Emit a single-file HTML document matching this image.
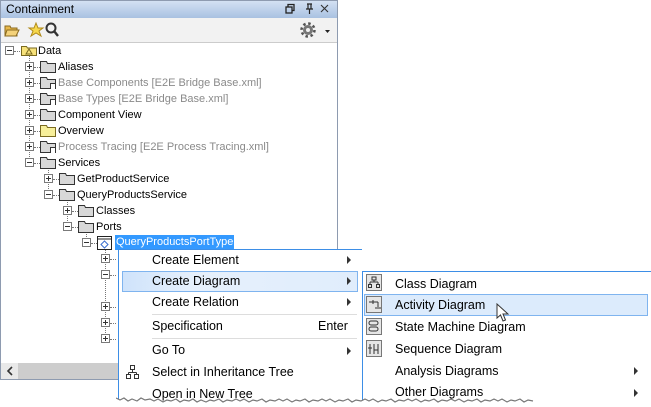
<!DOCTYPE html>
<html><head><style>
*{margin:0;padding:0;box-sizing:border-box}
body{width:651px;height:407px;background:#fff;position:relative;overflow:hidden;font-family:"Liberation Sans",sans-serif;font-size:11px;color:#000}
.a{position:absolute}
.t{position:absolute;white-space:nowrap;line-height:14px}
.g{color:#8a8a8a}
.ex{position:absolute;width:9px;height:9px;border:1px solid #7a7a7a;background:#fff;z-index:2}
.ex:before{content:"";position:absolute;left:1px;top:3px;width:5px;height:1px;background:#333}
.ex.p:after{content:"";position:absolute;left:3px;top:1px;width:1px;height:5px;background:#333}
.fo{position:absolute;width:16px;height:12px}
.hd{position:absolute;border-top:1px dotted #777;width:6px;height:0}
.vd{position:absolute;border-left:1px dotted #777;width:0}
.mi{position:absolute;left:152px;font-size:12.5px;line-height:15px}
.ar{position:absolute;width:0;height:0;border-left:4px solid #333;border-top:4px solid transparent;border-bottom:4px solid transparent}
.sm{position:absolute;left:395px;font-size:12.5px;line-height:15px}
</style></head><body>
<div class="a" style="left:0;top:0;width:338px;height:380px;border:1px solid #8e9bb0;background:#fff"></div>
<div class="a" style="left:0;top:0;width:338px;height:18px;background:linear-gradient(#d3e1f3,#a9c1e1);border:1px solid #8e9bb0;border-bottom:none"></div>
<div class="t" style="left:6px;top:2px;font-size:12px">Containment</div>
<svg class="a" style="left:280px;top:3px" width="50" height="12"><rect x="6" y="4" width="6" height="6" fill="none" stroke="#222" stroke-width="1.3"/><path d="M8 4V1.5h6v6h-2" fill="none" stroke="#222" stroke-width="1.3"/><path d="M27 1h5M28 1v5M31 1v5M26 6h7M29.5 6v5" stroke="#222" stroke-width="1.2" fill="none"/><path d="M41 2l7 7M48 2l-7 7" stroke="#333" stroke-width="1.1"/></svg>
<div class="a" style="left:1px;top:18px;width:336px;height:24px;background:#f2f2f2"></div>
<svg class="a" style="left:4px;top:22px" width="60" height="16"><path d="M1 4h5l1 2h6v8H1z" fill="#e8b84a" stroke="#8a6a20"/><path d="M3 8h12l-3 6H1z" fill="#f4d27a" stroke="#8a6a20"/><path d="M32 1l2 5h5l-4 3 2 5-5-3-5 3 2-5-4-3h5z" fill="#f7d84c" stroke="#b08a1a"/><circle cx="47" cy="6" r="4.5" fill="none" stroke="#333" stroke-width="2"/><path d="M50 9l4 5" stroke="#333" stroke-width="2.4"/></svg>
<svg class="a" style="left:300px;top:22px" width="36" height="16"><circle cx="8" cy="8" r="5" fill="#777"/><circle cx="8" cy="8" r="6.5" fill="none" stroke="#555" stroke-width="2.5" stroke-dasharray="2.5 2.6"/><circle cx="8" cy="8" r="2" fill="#f2f2f2"/><path d="M25 8h5l-2.5 3z" fill="#222"/></svg>
<div class="a" style="left:1px;top:42px;width:336px;height:1px;background:#ccc"></div>
<div class="vd" style="left:29px;top:56px;height:107px"></div>
<div class="vd" style="left:48px;top:168px;height:27px"></div>
<div class="vd" style="left:67px;top:200px;height:27px"></div>
<div class="vd" style="left:86px;top:232px;height:11px"></div>
<div class="vd" style="left:105px;top:248px;height:91px"></div>
<div class="ex" style="left:5px;top:46px"></div><div class="hd" style="left:14px;top:51px"></div>
<svg class="fo" style="left:21px;top:44px"><path d="M0.5 2.5h5l1 1.5h9v7.5H0.5z" fill="#f7e27b" stroke="#7a6a20"/><path d="M5 10l3-5 3 5z" fill="none" stroke="#7a6a20"/></svg>
<div class="t" style="left:38px;top:44px">Data</div>
<div class="ex p" style="left:25px;top:62px"></div><div class="hd" style="left:34px;top:67px"></div>
<svg class="fo" style="left:40px;top:61px"><path d="M0.5 0.5h6l1 2h8v9H0.5z" fill="#d8d8d8" stroke="#333"/></svg>
<div class="t" style="left:58px;top:60px">Aliases</div>
<div class="ex p" style="left:25px;top:78px"></div><div class="hd" style="left:34px;top:83px"></div>
<svg class="fo" style="left:40px;top:77px"><path d="M0.5 0.5h6l1 2h8v9H0.5z" fill="#d8d8d8" stroke="#333"/><rect x="10.5" y="6.5" width="5" height="6" fill="#fff" stroke="#333"/></svg>
<div class="t g" style="left:58px;top:76px">Base Components [E2E Bridge Base.xml]</div>
<div class="ex p" style="left:25px;top:94px"></div><div class="hd" style="left:34px;top:99px"></div>
<svg class="fo" style="left:40px;top:93px"><path d="M0.5 0.5h6l1 2h8v9H0.5z" fill="#d8d8d8" stroke="#333"/><rect x="10.5" y="6.5" width="5" height="6" fill="#fff" stroke="#333"/></svg>
<div class="t g" style="left:58px;top:92px">Base Types [E2E Bridge Base.xml]</div>
<div class="ex p" style="left:25px;top:110px"></div><div class="hd" style="left:34px;top:115px"></div>
<svg class="fo" style="left:40px;top:109px"><path d="M0.5 0.5h6l1 2h8v9H0.5z" fill="#d8d8d8" stroke="#333"/></svg>
<div class="t" style="left:58px;top:108px">Component View</div>
<div class="ex p" style="left:25px;top:126px"></div><div class="hd" style="left:34px;top:131px"></div>
<svg class="fo" style="left:40px;top:125px"><path d="M0.5 0.5h6l1 2h8v9H0.5z" fill="#f7ef9a" stroke="#7a6a20"/></svg>
<div class="t" style="left:58px;top:124px">Overview</div>
<div class="ex p" style="left:25px;top:142px"></div><div class="hd" style="left:34px;top:147px"></div>
<svg class="fo" style="left:40px;top:141px"><path d="M0.5 0.5h6l1 2h8v9H0.5z" fill="#d8d8d8" stroke="#333"/><rect x="10.5" y="6.5" width="5" height="6" fill="#fff" stroke="#333"/></svg>
<div class="t g" style="left:58px;top:140px">Process Tracing [E2E Process Tracing.xml]</div>
<div class="ex" style="left:25px;top:158px"></div><div class="hd" style="left:34px;top:163px"></div>
<svg class="fo" style="left:40px;top:157px"><path d="M0.5 0.5h6l1 2h8v9H0.5z" fill="#d8d8d8" stroke="#333"/></svg>
<div class="t" style="left:58px;top:156px">Services</div>
<div class="ex p" style="left:44px;top:174px"></div><div class="hd" style="left:53px;top:179px"></div>
<svg class="fo" style="left:59px;top:173px"><path d="M0.5 0.5h6l1 2h8v9H0.5z" fill="#d8d8d8" stroke="#333"/></svg>
<div class="t" style="left:77px;top:172px">GetProductService</div>
<div class="ex" style="left:44px;top:190px"></div><div class="hd" style="left:53px;top:195px"></div>
<svg class="fo" style="left:59px;top:189px"><path d="M0.5 0.5h6l1 2h8v9H0.5z" fill="#d8d8d8" stroke="#333"/></svg>
<div class="t" style="left:77px;top:188px">QueryProductsService</div>
<div class="ex p" style="left:63px;top:206px"></div><div class="hd" style="left:72px;top:211px"></div>
<svg class="fo" style="left:78px;top:205px"><path d="M0.5 0.5h6l1 2h8v9H0.5z" fill="#d8d8d8" stroke="#333"/></svg>
<div class="t" style="left:96px;top:204px">Classes</div>
<div class="ex" style="left:63px;top:222px"></div><div class="hd" style="left:72px;top:227px"></div>
<svg class="fo" style="left:78px;top:221px"><path d="M0.5 0.5h6l1 2h8v9H0.5z" fill="#d8d8d8" stroke="#333"/></svg>
<div class="t" style="left:96px;top:220px">Ports</div>
<div class="ex" style="left:82px;top:238px"></div><div class="hd" style="left:91px;top:243px"></div>
<svg class="a" style="left:97px;top:236px" width="16" height="14"><rect x="0.5" y="0.5" width="14" height="13" fill="#fff" stroke="#222"/><line x1="0.5" y1="3" x2="14.5" y2="3" stroke="#222"/><path d="M7.5 5l3.5 3.5-3.5 3.5-3.5-3.5z" fill="none" stroke="#3b6fd0"/></svg>
<div class="a" style="left:115px;top:235px;width:119px;height:15px;background:#3399ff"></div>
<div class="t" style="left:116px;top:235px;color:#fff">QueryProductsPortType</div>
<div class="ex p" style="left:101px;top:254px"></div><div class="hd" style="left:110px;top:259px"></div>
<div class="ex" style="left:101px;top:270px"></div><div class="hd" style="left:110px;top:275px"></div>
<div class="ex p" style="left:101px;top:302px"></div><div class="hd" style="left:110px;top:307px"></div>
<div class="ex p" style="left:101px;top:318px"></div><div class="hd" style="left:110px;top:323px"></div>
<div class="ex p" style="left:101px;top:334px"></div><div class="hd" style="left:110px;top:339px"></div>
<div class="a" style="left:1px;top:363px;width:17px;height:16px;background:#e9e9e9"></div>
<svg class="a" style="left:5px;top:366px" width="10" height="10"><path d="M7 1L3 5l4 4" stroke="#333" stroke-width="1.6" fill="none"/></svg>
<div class="a" style="left:18px;top:363px;width:319px;height:16px;background:#cdcdcd"></div>
<div class="a" style="left:118px;top:249px;width:244px;height:150px;background:#fff;border-left:1px solid #3d8ee6;border-top:1px solid #3d8ee6"></div>
<div class="a" style="left:122px;top:271px;width:236px;height:21px;background:linear-gradient(90deg,#cfe3fb,#e6f0fc 30%,#e0edfc);border:1px solid #7fb4ef"></div>
<div class="mi" style="top:253px">Create Element</div><div class="ar" style="left:347px;top:256px"></div>
<div class="mi" style="top:274px">Create Diagram</div><div class="ar" style="left:347px;top:277px"></div>
<div class="mi" style="top:295px">Create Relation</div><div class="ar" style="left:347px;top:298px"></div>
<div class="a" style="left:152px;top:314px;width:205px;height:1px;background:#ddd"></div>
<div class="mi" style="top:319px">Specification</div><div class="mi" style="left:318px;top:319px">Enter</div>
<div class="a" style="left:152px;top:338px;width:205px;height:1px;background:#ddd"></div>
<div class="mi" style="top:343px">Go To</div><div class="ar" style="left:347px;top:347px"></div>
<svg class="a" style="left:126px;top:365px" width="14" height="14"><rect x="4.5" y="0.5" width="4" height="4" fill="none" stroke="#333"/><path d="M6.5 4.5v3M2.5 7.5h8M2.5 7.5v2M10.5 7.5v2" stroke="#333" fill="none"/><rect x="0.5" y="9.5" width="4" height="4" fill="none" stroke="#333"/><rect x="8.5" y="9.5" width="4" height="4" fill="none" stroke="#333"/></svg>
<div class="mi" style="top:365px">Select in Inheritance Tree</div>
<div class="mi" style="top:387px">Open in New Tree</div>
<div class="a" style="left:362px;top:271px;width:289px;height:130px;background:#fff;border-left:1px solid #3d8ee6;border-top:1px solid #3d8ee6"></div>
<div class="a" style="left:364px;top:294px;width:284px;height:22px;background:#dcebfc;border:1px solid #7fb4ef"></div>
<svg class="a" style="left:366px;top:274px" width="18" height="100"><g fill="#e6e6e6" stroke="#777"><rect x="0.5" y="0.5" width="15" height="16"/><rect x="0.5" y="22.5" width="15" height="16"/><rect x="0.5" y="44.5" width="15" height="16"/><rect x="0.5" y="66.5" width="15" height="16"/></g><g stroke="#333" fill="none"><rect x="6" y="3" width="4" height="3"/><path d="M8 6v2M4 8h8M4 8v2M12 8v2"/><rect x="2.5" y="10.5" width="3" height="3"/><rect x="10.5" y="10.5" width="3" height="3"/><path d="M3 28h4M7 26v4M7 28h5M12 28v5M9 34h6"/><rect x="3" y="47" width="9" height="4" rx="2"/><rect x="3" y="53" width="9" height="4" rx="2"/><path d="M4 70v10M8 70v10M12 70v10M2 74h4M8 76h4"/></g></svg>
<div class="sm" style="top:277px">Class Diagram</div>
<div class="sm" style="top:298px">Activity Diagram</div>
<div class="sm" style="top:320px">State Machine Diagram</div>
<div class="sm" style="top:342px">Sequence Diagram</div>
<div class="sm" style="top:364px">Analysis Diagrams</div><div class="ar" style="left:634px;top:367px"></div>
<div class="sm" style="top:385px">Other Diagrams</div><div class="ar" style="left:634px;top:389px"></div>
<svg class="a" style="left:496px;top:303px" width="14" height="20"><path d="M1 1v14l3.5-3 2.5 6 2.5-1-2.5-6h5z" fill="#fff" stroke="#333"/></svg>
<svg class="a" style="left:116px;top:392px" width="535" height="15"><path d="M0 6 l4 2 4-2 4 3 4-2 5 2 4-3 4 2 5-1 4 2 4-2 5 3 4-2 4 1 5-2 4 3 4-2 5 1 4-2 4 3 4-2 5 2 4-2 4 1 5-2 4 3 4-2 5 1 4-2 4 2 4-2 5 3 4-2 4 1 5-2 4 3 4-2 5 1 4-2 4 2 4-2 5 3 4-2 4 1 5-2 4 3 4-2 5 1 4-2 4 2 4-2 5 3 4-2 4 1 5-2 4 3 4-2 5 1 4-2 4 2 4-2 5 3 4-2 4 1 5-2 4 3 4-2 5 1 4-2 4 2 4-2 5 3 4-2 4 1 5-2 4 3 4-2 5 1 4-2 4 2 4-2 5 3 4-2 4 1 5-2 4 3 4-2 5 1 4-2 4 2 4-2 5 3 4-2 4 1 5-2 4 3 4-2 5 1 V15 H0z" fill="#fff" stroke="none"/><path d="M0 6 l4 2 4-2 4 3 4-2 5 2 4-3 4 2 5-1 4 2 4-2 5 3 4-2 4 1 5-2 4 3 4-2 5 1 4-2 4 3 4-2 5 2 4-2 4 1 5-2 4 3 4-2 5 1 4-2 4 2 4-2 5 3 4-2 4 1 5-2 4 3 4-2 5 1 4-2 4 2 4-2 5 3 4-2 4 1 5-2 4 3 4-2 5 1 4-2 4 2 4-2 5 3 4-2 4 1 5-2 4 3 4-2 5 1 4-2 4 2 4-2 5 3 4-2 4 1 5-2 4 3 4-2 5 1 4-2 4 2 4-2 5 3 4-2 4 1 5-2 4 3 4-2 5 1 4-2 4 2 4-2 5 3 4-2 4 1 5-2 4 3 4-2 5 1 4-2 4 2 4-2 5 3 4-2 4 1 5-2 4 3 4-2 5 1" fill="none" stroke="#777" stroke-width="1.2"/></svg>
</body></html>
